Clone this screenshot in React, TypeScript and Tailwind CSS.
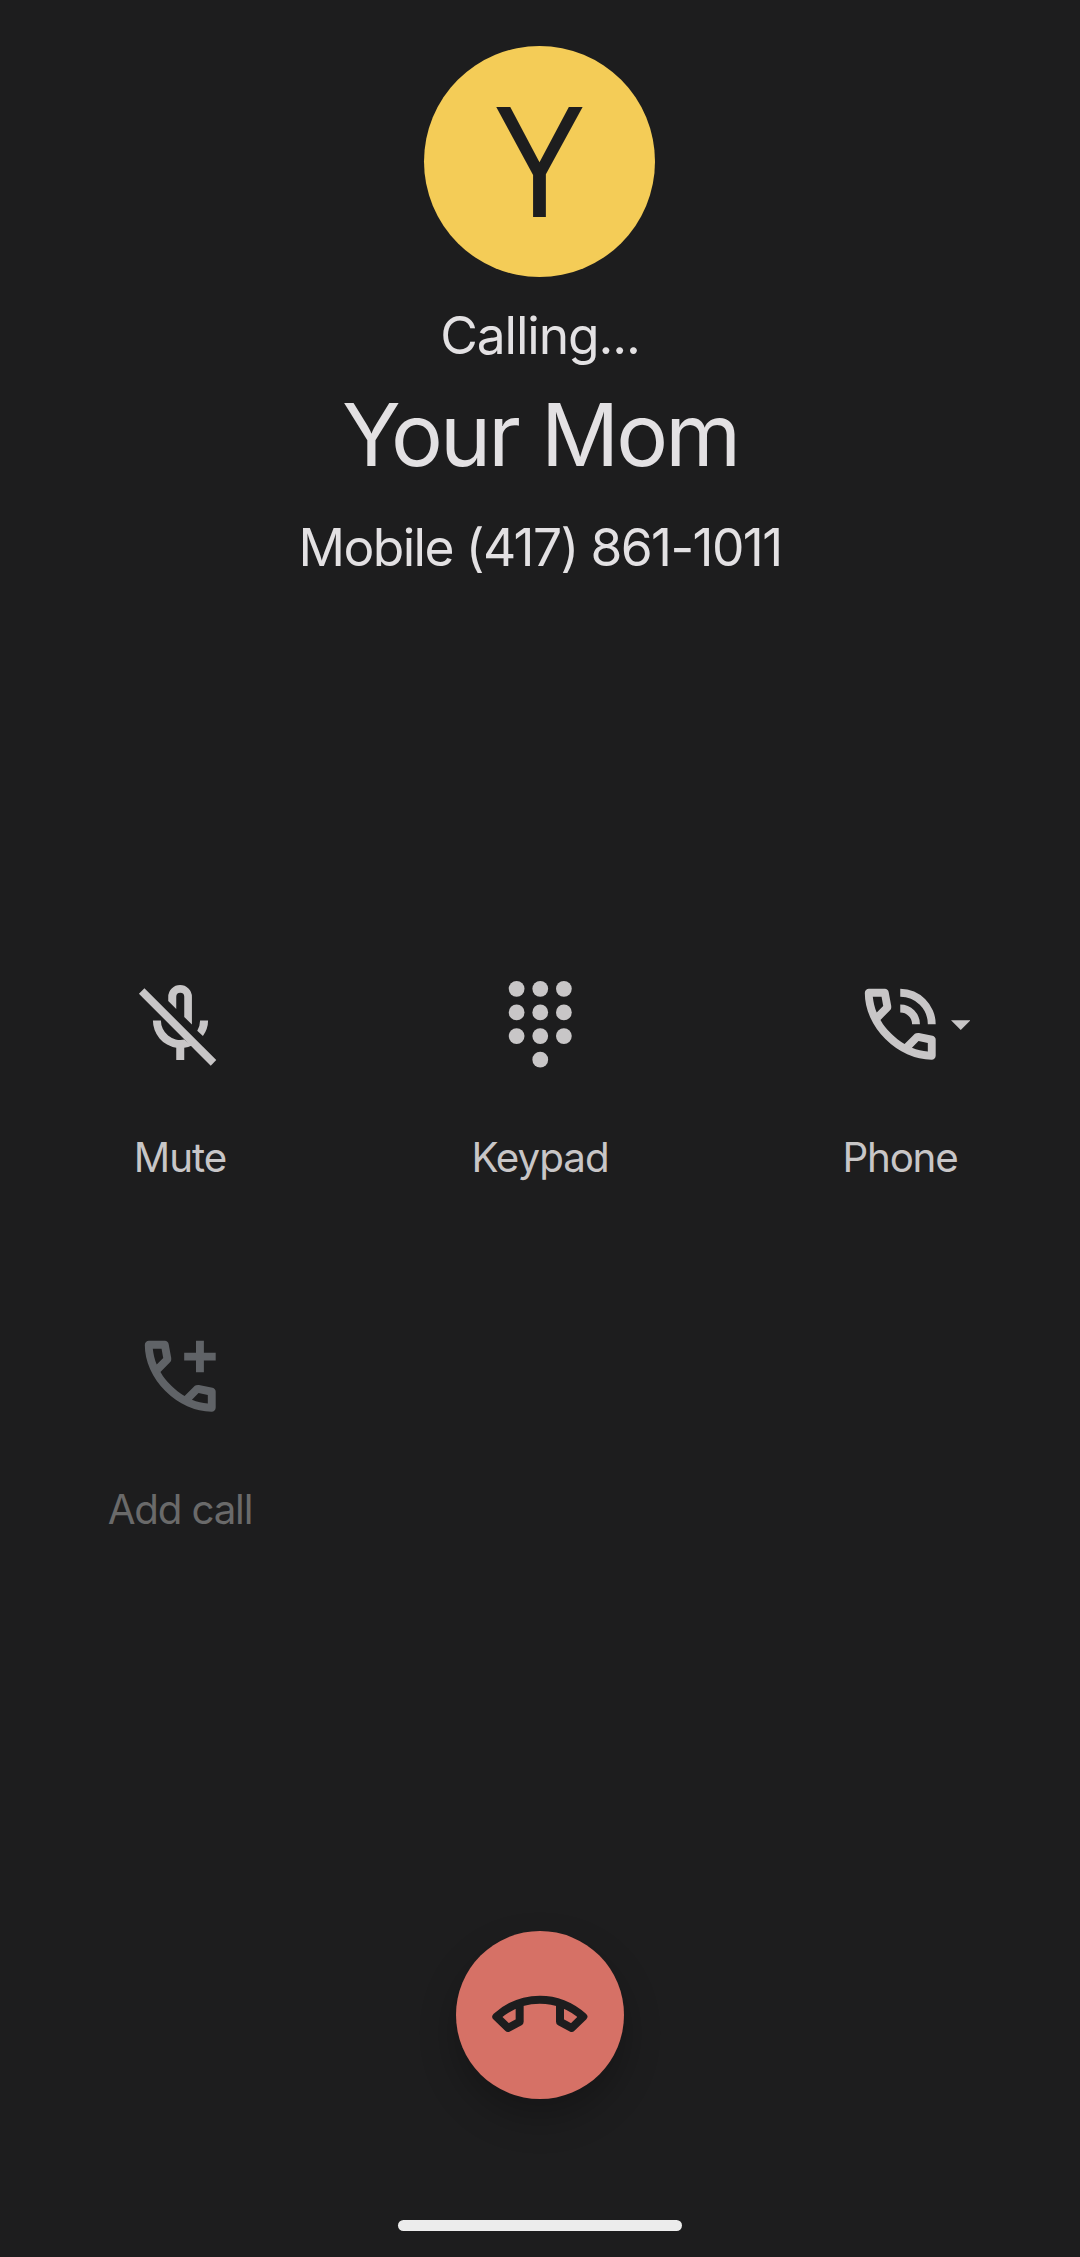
import type { ReactNode } from "react";

const HANDSET =
  "M798-120q-125 0-247-54.5T329-329Q229-429 174.5-551T120-798q0-18 12-30t30-12h162q14 0 25 9.5t13 22.5l26 140q2 16-1 27t-11 19l-97 98q20 37 47.5 71.5T387-386q31 31 65 57.5t72 48.5l94-94q9-9 23.5-13.5T670-390l138 28q14 4 23 14.5t9 23.5v162q0 18-12 30t-30 12ZM241-600l66-66-17-94h-89q5 41 14 81t26 79Zm358 358q39 17 79.5 27t81.5 13v-88l-94-19-67 67Z";

function MicOffIcon() {
  return (
    <svg className="size-full" viewBox="68.25 50.25 283.5 283.5" fill="currentColor">
      <path d="M102.500 84L318 299.500L301.500 316.500L86 100.500Z" />
      <path d="M174 122V109.500A35.500 35.500 0 0 1 245 109.500V193L222 170V109.500A12 12 0 0 0 198 109.500V146Z" />
      <path d="M128 180.500H152A58.500 58.500 0 0 0 222 238L245 256Q234 261 222 262.500V299.500H198V262.500A83 83 0 0 1 128 180.500Z" />
      <path d="M269.500 180.500H293.500Q293.500 205 278 227.500L261 211.500Q269.500 197 269.500 180.500Z" />
    </svg>
  );
}

const KEYS = [3, 9, 15].flatMap((y) => [6, 12, 18].map((x) => [x, y])).concat([[12, 21]]);

function KeypadIcon() {
  return (
    <svg className="size-full" viewBox="0 0 24 24" fill="currentColor">
      {KEYS.map(([x, y]) => (
        <circle key={`${x}-${y}`} cx={x} cy={y} r="2" />
      ))}
    </svg>
  );
}

function PhoneInTalkIcon() {
  return (
    <svg className="size-full" viewBox="0 -960 960 960" fill="currentColor">
      <path d={HANDSET} />
      <path d="M760-480q0-117-81.500-198.500T480-760v-80q75 0 140.500 28.500t114 77q48.500 48.500 77 114T840-480h-80Zm-160 0q0-50-35-85t-85-35v-80q83 0 141.500 58.500T680-480h-80Z" />
    </svg>
  );
}

function AddCallIcon() {
  return (
    <svg className="size-full" viewBox="0 -960 960 960" fill="currentColor">
      <path d={HANDSET} />
      <path d="M640-520v-120H520v-80h120v-120h80v120h120v80H720v120h-80Z" />
    </svg>
  );
}

function HangUpIcon() {
  return (
    <svg
      className="mb-[3px] h-[40px] w-[100px]"
      viewBox="212 282 300 120"
      fill="none"
      stroke="currentColor"
      strokeWidth="24"
      strokeLinejoin="round"
    >
      <path d="M301 308V365L266 384L231 350Q289 299 361.500 299T492 350L457 384L422 365V308" />
    </svg>
  );
}

function Action({
  label,
  tracking,
  disabled = false,
  menu = false,
  children,
}: {
  label: string;
  tracking: string;
  disabled?: boolean;
  menu?: boolean;
  children: ReactNode;
}) {
  return (
    <button disabled={disabled} className="flex flex-col items-center">
      <span className={`relative block size-[94.5px] ${disabled ? "text-[#606367]" : "text-[#c8c6c7]"}`}>
        {children}
        {menu && (
          <svg className="absolute top-[42.500px] left-[98px] h-[10px] w-[19.500px]" viewBox="0 0 20 10" fill="currentColor">
            <path d="M0 0H20L10 10Z" />
          </svg>
        )}
      </span>
      <span
        className={`mt-[62.5px] h-12 text-[40.3px] leading-[48px] font-[400] ${tracking} ${
          disabled ? "text-[#6a6a6a]" : "text-[#c8c6c7]"
        }`}
      >
        {label}
      </span>
    </button>
  );
}

export default function App() {
  return (
    <main className="flex h-[2257px] w-[1080px] flex-col items-center overflow-hidden bg-[#1d1d1e] pt-[46px] font-['Inter',sans-serif] text-[#e3e1e3]">
      <div className="mr-px size-[231px] shrink-0 rounded-full bg-[#f4cc57] text-center font-['Open_Sans',sans-serif] text-[154.5px] leading-[222px] font-[400] text-[#1d1d1e]">
        Y
      </div>
      <p className="mt-7 h-[60px] text-[51.5px] leading-[60px] font-[370] tracking-[-1.1px]">Calling...</p>
      <h1 className="mt-5 h-[100px] text-[86.6px] leading-[100px] font-[370] tracking-[-3px] [word-spacing:2px]">
        Your Mom
      </h1>
      <p className="mt-8 h-[60px] text-[51.5px] leading-[60px] font-[370] tracking-[-1.6px]">
        Mobile (417) 861-1011
      </p>

      <section className="mt-[400px] grid w-full grid-cols-3 gap-y-[147px]">
        <Action label="Mute" tracking="tracking-[-1px]">
          <MicOffIcon />
        </Action>
        <Action label="Keypad" tracking="tracking-[-1px]">
          <KeypadIcon />
        </Action>
        <Action label="Phone" tracking="tracking-[-1.2px]" menu>
          <PhoneInTalkIcon />
        </Action>
        <Action label="Add call" tracking="tracking-[-1.2px]" disabled>
          <AddCallIcon />
        </Action>
      </section>

      <button
        aria-label="End call"
        className="mt-[397px] flex size-[168px] shrink-0 items-center justify-center rounded-full bg-[#d67166] text-[#1d1d1e] shadow-[0_18px_36px_rgba(0,0,0,0.25)]"
      >
        <HangUpIcon />
      </button>

      <div className="mt-auto mb-[26px] h-[11px] w-[284px] rounded-full bg-[#ececec]" />
    </main>
  );
}
